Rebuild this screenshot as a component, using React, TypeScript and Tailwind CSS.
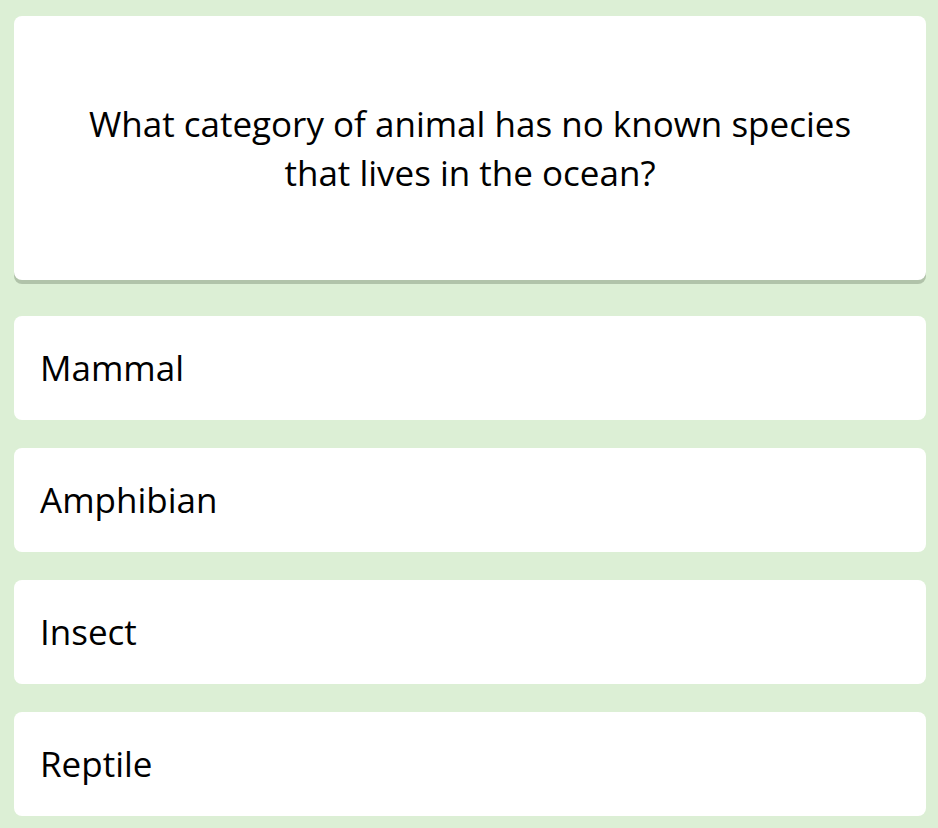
const answers = ['Mammal', 'Amphibian', 'Insect', 'Reptile']

export default function App() {
  return (
    <div className="min-h-screen bg-[#dcefd5] pt-4 pb-3 pl-[14px] pr-3 font-['Open_Sans',sans-serif] text-black">
      <div className="flex h-[264px] items-center justify-center rounded-lg bg-white px-14 text-center text-[35px] leading-[49px] shadow-[0_4px_0_#b1c3aa]">
        <p>What category of animal has no known species that lives in the ocean?</p>
      </div>
      <div className="mt-9 flex flex-col gap-7">
        {answers.map((answer) => (
          <button
            key={answer}
            className="flex h-[104px] items-center rounded-lg bg-white pl-[26px] pr-7 text-left text-[35px]"
          >
            {answer}
          </button>
        ))}
      </div>
    </div>
  )
}
